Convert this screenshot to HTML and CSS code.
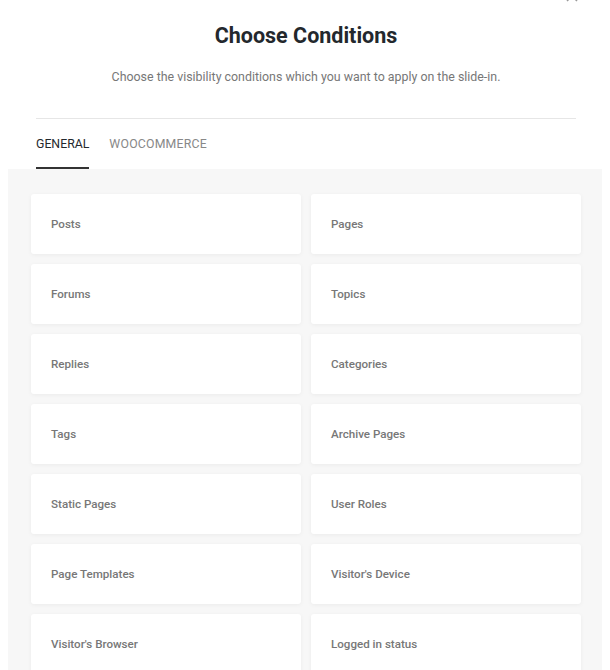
FILE: index.html
```html
<!DOCTYPE html>
<html>
<head>
<meta charset="utf-8">
<link rel="stylesheet" href="styles.css">
</head>
<body>
<div class="modal">
  <svg class="close" width="12" height="12" viewBox="0 0 12 12"><path d="M1 1L11 11M11 1L1 11" stroke="#999" stroke-width="1.5" fill="none"/></svg>
  <div class="header">
    <h1 class="title">Choose Conditions</h1>
    <p class="subtitle">Choose the visibility conditions which you want to apply on the slide-in.</p>
  </div>
  <div class="tabs">
    <div class="tab active">GENERAL</div>
    <div class="tab">WOOCOMMERCE</div>
  </div>
  <div class="panel">
    <div class="grid">
      <div class="card">Posts</div>
      <div class="card">Pages</div>
      <div class="card">Forums</div>
      <div class="card">Topics</div>
      <div class="card">Replies</div>
      <div class="card">Categories</div>
      <div class="card">Tags</div>
      <div class="card">Archive Pages</div>
      <div class="card">Static Pages</div>
      <div class="card">User Roles</div>
      <div class="card">Page Templates</div>
      <div class="card">Visitor's Device</div>
      <div class="card">Visitor's Browser</div>
      <div class="card">Logged in status</div>
    </div>
  </div>
</div>
</body>
</html>
```

FILE: styles.css
```css
html, body {
  margin: 0;
  padding: 0;
  background: #fff;
  overflow: hidden;
}
body {
  font-family: Roboto, "Liberation Sans", Arial, sans-serif;
  padding: 0 8px;
}
.modal {
  position: relative;
  width: 594px;
}
.close {
  position: absolute;
  left: 558px;
  top: -10px;
}
.header {
  margin: 0 26px 0 28px;
  border-bottom: 1px solid #e6e6e6;
  text-align: center;
  padding-top: 23px;
  height: 119px;
  box-sizing: border-box;
}
.title {
  margin: 0;
  font-size: 21.5px;
  font-weight: 700;
  line-height: 26px;
  color: #23282d;
}
.subtitle {
  margin: 18px 0 0;
  font-size: 12.4px;
  line-height: 20px;
  color: #777;
}
.tabs {
  display: flex;
  gap: 20px;
  margin-left: 28px;
  height: 50px;
}
.tab {
  font-size: 12.3px;
  font-weight: 400;
  color: #888;
  padding-top: 18px;
  box-sizing: border-box;
  height: 50px;
  line-height: 14px;
  letter-spacing: 0.2px;
}
.tab.active {
  color: #23282d;
  letter-spacing: 0;
  border-bottom: 2px solid #333;
}
.panel {
  background: #f7f7f7;
  padding: 25px 21px 20px 23px;
}
.grid {
  display: grid;
  grid-template-columns: 270px 270px;
  gap: 10px;
}
.card {
  background: #fff;
  height: 60px;
  border-radius: 3px;
  box-shadow: 0 1px 4px rgba(0,0,0,0.05);
  display: flex;
  align-items: center;
  padding-left: 20px;
  font-size: 11.6px;
  font-weight: 500;
  color: #777;
}
```
